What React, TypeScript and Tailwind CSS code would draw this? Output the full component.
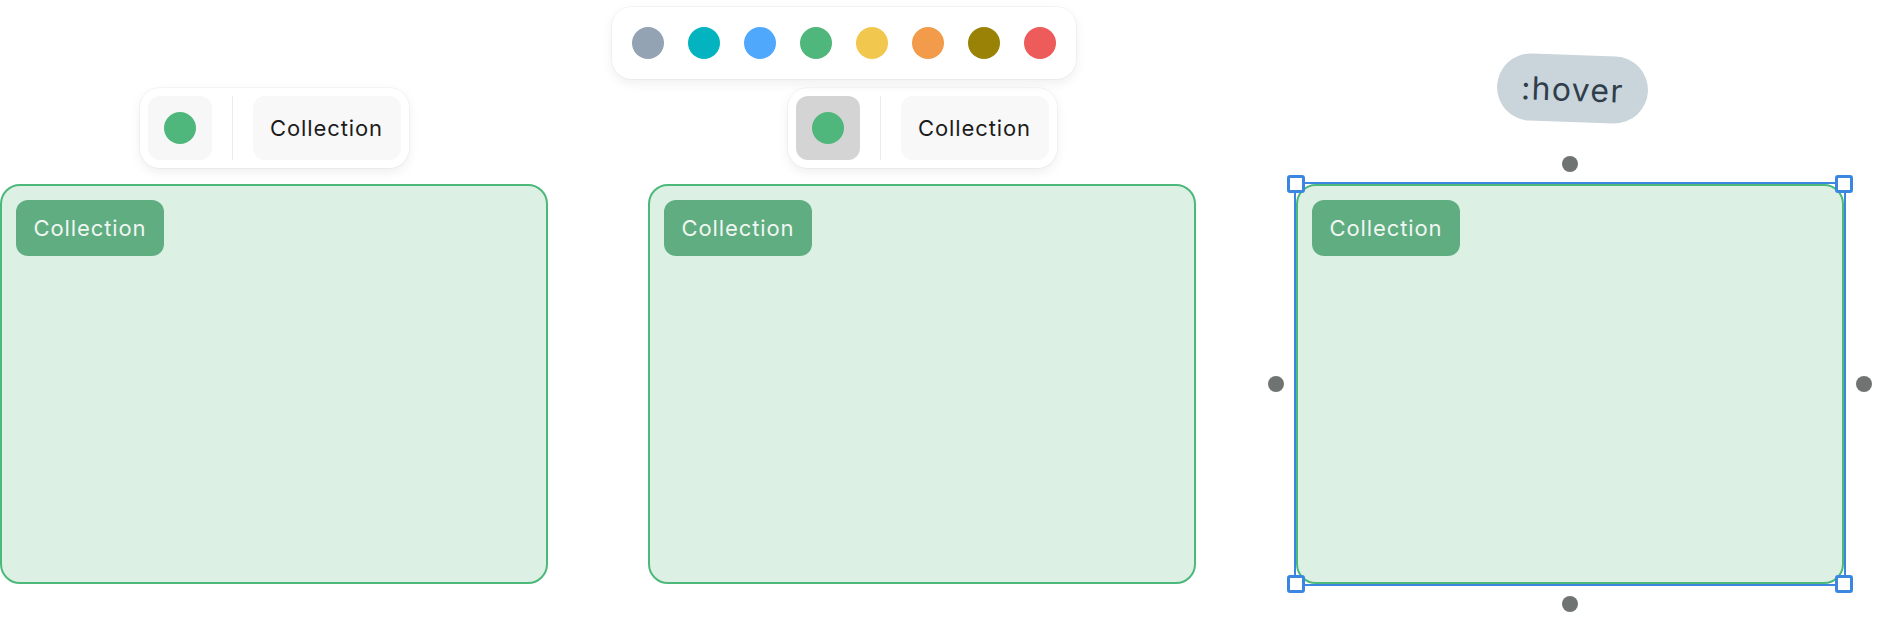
import React from "react";

const PALETTE = [
  "#94a3b3",
  "#03b4c0",
  "#50a8fd",
  "#4fb77b",
  "#f2c74e",
  "#f19b4b",
  "#9a8206",
  "#ee5b5b",
];

// 툴바: 색상 버튼 + 구분선 + 이름 버튼
const Toolbar = ({ active }: { active?: boolean }) => (
  <div className="flex items-center gap-5 p-2 bg-white rounded-[20px] shadow-[0_0_0_1px_rgba(0,0,0,0.03),0_4px_12px_rgba(0,0,0,0.07)]">
    <button
      className={`w-16 h-16 rounded-[12px] flex items-center justify-center ${
        active ? "bg-[#d4d4d4]" : "bg-[#f7f7f7]"
      }`}
    >
      <span className="w-8 h-8 rounded-full bg-[#4fb77b]" />
    </button>
    <div className="w-px h-16 bg-[#ececec]" />
    <button className="w-[148px] h-16 rounded-[12px] bg-[#f8f8f8] text-[22px] tracking-[0.04em] text-[#1c1c1c]">
      Collection
    </button>
  </div>
);

const Palette = () => (
  <div className="flex p-2 bg-white rounded-[20px] shadow-[0_0_0_1px_rgba(0,0,0,0.03),0_4px_12px_rgba(0,0,0,0.07)]">
    {PALETTE.map((c) => (
      <button key={c} className="w-14 h-14 flex items-center justify-center">
        <span className="w-8 h-8 rounded-full" style={{ backgroundColor: c }} />
      </button>
    ))}
  </div>
);

const Card = ({ children }: { children?: React.ReactNode }) => (
  <div className="relative w-[548px] h-[400px] rounded-[20px] border-2 border-[#4cb87a] bg-[#dcf0e4] p-[14px]">
    <div className="w-[148px] h-14 rounded-[12px] bg-[#5fad80] flex items-center justify-center text-[22px] tracking-[0.04em] text-[#f0f6f2]">
      Collection
    </div>
    {children}
  </div>
);

const Handle = ({ className }: { className: string }) => (
  <span
    className={`absolute w-[18px] h-[18px] rounded-[3px] bg-white border-[3px] border-[#3a86e0] ${className}`}
  />
);

const Dot = ({ className }: { className: string }) => (
  <span className={`absolute w-4 h-4 rounded-full bg-[#6f7371] ${className}`} />
);

export default function App() {
  return (
    <div className="w-[1884px] h-[622px] bg-white flex gap-[100px] font-['Inter','Liberation_Sans',sans-serif]">
      {/* 기본 상태 */}
      <div className="flex flex-col">
        <div className="h-[184px] flex flex-col justify-end items-center pb-4">
          <Toolbar />
        </div>
        <Card />
      </div>

      {/* 색상 팔레트 열림 */}
      <div className="flex flex-col">
        <div className="h-[184px] flex flex-col justify-end items-center pb-4">
          <div className="relative">
            <div className="absolute bottom-[calc(100%+9px)] -right-[19px]">
              <Palette />
            </div>
            <Toolbar active />
          </div>
        </div>
        <Card />
      </div>

      {/* hover + 선택 상태 */}
      <div className="flex flex-col">
        <div className="h-[184px] flex flex-col items-center pt-[55px]">
          <div className="ml-[5px] w-[151px] h-[67px] rounded-full bg-[#c9d4db] rotate-2 flex items-center justify-center pt-[2px] text-[32px] tracking-[0.04em] text-[#2f3e4a]">
            :hover
          </div>
        </div>
        <Card>
          <span className="absolute -inset-[4px] border-2 border-[#3a86e0] pointer-events-none" />
          <Handle className="-left-[11px] -top-[11px]" />
          <Handle className="-right-[11px] -top-[11px]" />
          <Handle className="-left-[11px] -bottom-[11px]" />
          <Handle className="-right-[11px] -bottom-[11px]" />
          <Dot className="left-[264px] -top-[30px]" />
          <Dot className="left-[264px] -bottom-[30px]" />
          <Dot className="-left-[30px] top-[190px]" />
          <Dot className="-right-[30px] top-[190px]" />
        </Card>
      </div>
    </div>
  );
}
